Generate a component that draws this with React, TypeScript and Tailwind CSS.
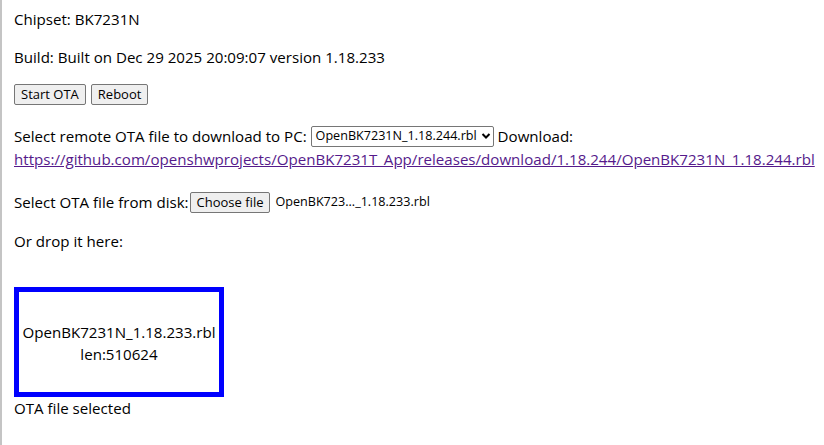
export default function App() {
  return (
    <div
      className="min-h-[445px] border-l-2 border-[#c4c4c4] bg-white pl-3 pt-px text-[15.1px] leading-[22px] text-black"
      style={{ fontFamily: '"Open Sans", sans-serif' }}
    >
      <p className="mt-[7px]">Chipset: BK7231N</p>
      <p className="mt-4">Build: Built on Dec 29 2025 20:09:07 version 1.18.233</p>

      <div className="mt-4 flex gap-[5px]">
        <button className="h-[21px] rounded-[2px] border border-[#767676] bg-[#efefef] px-[6px] text-[13px] leading-none">
          Start OTA
        </button>
        <button className="h-[21px] rounded-[2px] border border-[#767676] bg-[#efefef] px-[6px] text-[13px] leading-none">
          Reboot
        </button>
      </div>

      <div className="mt-5">
        <div className="flex h-[22px] items-center">
          <span>Select remote OTA file to download to PC:&nbsp;</span>
          <div className="flex h-[21px] items-center gap-[4px] rounded-[2px] border border-[#767676] pl-[4px] pr-[2px] text-[12.6px]">
            <span>OpenBK7231N_1.18.244.rbl</span>
            <svg width="10" height="8" viewBox="0 0 10 8">
              <path d="M1.5 2l3.5 3.5 3.5-3.5" fill="none" stroke="black" strokeWidth="2" />
            </svg>
          </div>
          <span>&nbsp;Download:</span>
        </div>
        <a className="mt-[1px] block whitespace-nowrap text-[#551a8b] underline">
          https://github.com/openshwprojects/OpenBK7231T_App/releases/download/1.18.244/OpenBK7231N_1.18.244.rbl
        </a>
      </div>

      <div className="mt-5 flex h-[24px] items-center">
        <span>Select OTA file from disk:</span>
        <button className="ml-[1px] h-[21px] rounded-[2px] border border-[#767676] bg-[#efefef] px-[6px] text-[13px] leading-none">
          Choose file
        </button>
        <span className="ml-[5px] text-[12.6px]">OpenBK723..._1.18.233.rbl</span>
      </div>

      <p className="mt-4">Or drop it here:</p>

      <div className="mt-[35px] flex h-[110px] w-[210px] flex-col items-center justify-center border-[5px] border-[#0000ff] pt-[1px] text-center">
        <span>OpenBK7231N_1.18.233.rbl</span>
        <span>len:510624</span>
      </div>
      <p>OTA file selected</p>
    </div>
  );
}
